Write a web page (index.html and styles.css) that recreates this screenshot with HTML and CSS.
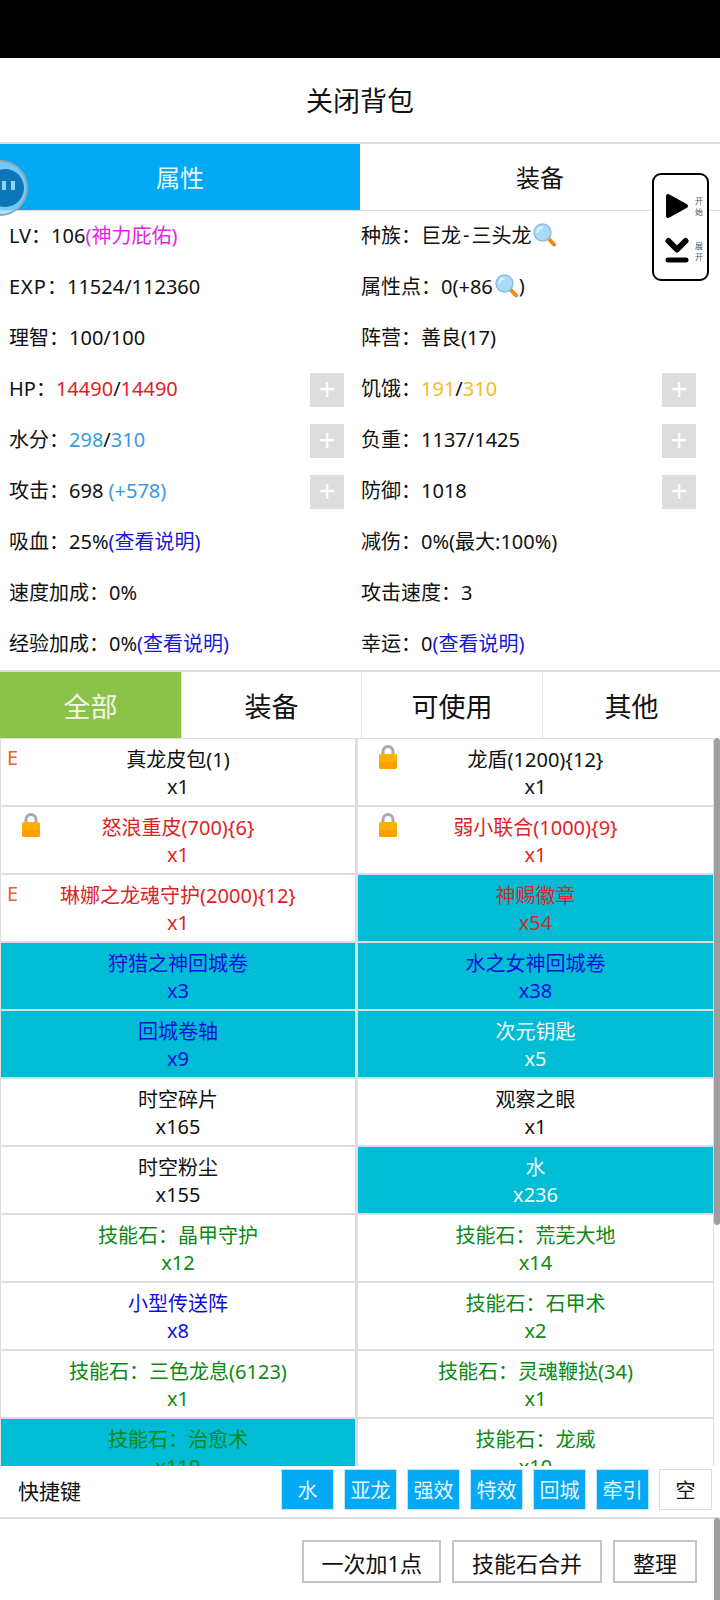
FILE: index.html
```html
<!DOCTYPE html>
<html lang="zh-CN">
<head>
    <meta charset="UTF-8">
    <meta name="viewport" content="width=device-width, initial-scale=1.0">
    <title>关闭背包</title>
    <link rel="stylesheet" href="styles.css">
</head>
<body>
    <svg class="defs" width="0" height="0">
        <symbol id="lens" viewBox="0 0 24 24">
            <path d="M14.5 14.5 L21 21.5" stroke="#f08a1c" stroke-width="4" stroke-linecap="round"/>
            <circle cx="9.5" cy="9.5" r="8.5" fill="#a8dbf7" stroke="#8bbddb" stroke-width="1.4"/>
            <path d="M4.5 9 A5 5 0 0 1 9 4.5" fill="none" stroke="#e4f5fd" stroke-width="1.8" stroke-linecap="round"/>
        </symbol>
        <symbol id="lock" viewBox="0 0 18 24">
            <path d="M4 11 V6.5 A5 5 0 0 1 14 6.5 V11" fill="none" stroke="#a9a9a9" stroke-width="3"/>
            <rect x="0" y="9" width="18" height="15" rx="2" fill="#ffb000"/>
            <rect x="0" y="17" width="18" height="7" rx="2" fill="#ff9f00"/>
        </symbol>
    </svg>

    <div class="page">
        <div class="statusbar"></div>
        <div class="title"><span>关闭背包</span></div>

        <div class="tabs">
            <div class="tab active"><span>属性</span></div>
            <div class="tab"><span>装备</span></div>
        </div>

        <div class="attrs">
            <div class="attr"><span>LV：106<span class="pink">(神力庇佑)</span></span></div>
            <div class="attr"><span class="with-icon">种族：巨龙<span class="dash">-</span>三头龙<svg class="lens"><use href="#lens"/></svg></span></div>
            <div class="attr"><span><span class="wide">EXP</span>：11524/112360</span></div>
            <div class="attr"><span class="with-icon">属性点：0(+86<svg class="lens"><use href="#lens"/></svg>)</span></div>
            <div class="attr"><span>理智：100/100</span></div>
            <div class="attr"><span>阵营：善良(17)</span></div>
            <div class="attr"><span>HP：<span class="red">14490</span>/<span class="red">14490</span></span><div class="plus">+</div></div>
            <div class="attr"><span>饥饿：<span class="yellow">191</span>/<span class="yellow">310</span></span><div class="plus">+</div></div>
            <div class="attr"><span>水分：<span class="sky">298</span>/<span class="sky">310</span></span><div class="plus">+</div></div>
            <div class="attr"><span>负重：1137/1425</span><div class="plus">+</div></div>
            <div class="attr"><span>攻击：698 <span class="sky">(+578)</span></span><div class="plus">+</div></div>
            <div class="attr"><span>防御：1018</span><div class="plus">+</div></div>
            <div class="attr"><span>吸血：25%<span class="link">(查看说明)</span></span></div>
            <div class="attr"><span>减伤：0%(最大:100%)</span></div>
            <div class="attr"><span>速度加成：0%</span></div>
            <div class="attr"><span>攻击速度：3</span></div>
            <div class="attr"><span>经验加成：0%<span class="link">(查看说明)</span></span></div>
            <div class="attr"><span>幸运：0<span class="link">(查看说明)</span></span></div>
        </div>

        <div class="filters">
            <div class="filter active">全部</div>
            <div class="filter">装备</div>
            <div class="filter">可使用</div>
            <div class="filter">其他</div>
        </div>

        <div class="items">
            <div class="item"><span class="mark">E</span>真龙皮包(1)<br>x1</div>
            <div class="item"><svg class="lock"><use href="#lock"/></svg>龙盾(1200){12}<br>x1</div>
            <div class="item red"><svg class="lock"><use href="#lock"/></svg>怒浪重皮(700){6}<br>x1</div>
            <div class="item red"><svg class="lock"><use href="#lock"/></svg>弱小联合(1000){9}<br>x1</div>
            <div class="item red"><span class="mark">E</span>琳娜之龙魂守护(2000){12}<br>x1</div>
            <div class="item teal dark-red">神赐徽章<br>x54</div>
            <div class="item teal blue">狩猎之神回城卷<br>x3</div>
            <div class="item teal blue">水之女神回城卷<br>x38</div>
            <div class="item teal blue">回城卷轴<br>x9</div>
            <div class="item teal white">次元钥匙<br>x5</div>
            <div class="item">时空碎片<br>x165</div>
            <div class="item">观察之眼<br>x1</div>
            <div class="item">时空粉尘<br>x155</div>
            <div class="item teal white">水<br>x236</div>
            <div class="item green">技能石：晶甲守护<br>x12</div>
            <div class="item green">技能石：荒芜大地<br>x14</div>
            <div class="item blue">小型传送阵<br>x8</div>
            <div class="item green">技能石：石甲术<br>x2</div>
            <div class="item green">技能石：三色龙息(6123)<br>x1</div>
            <div class="item green">技能石：灵魂鞭挞(34)<br>x1</div>
            <div class="item teal green">技能石：治愈术<br>x119</div>
            <div class="item green">技能石：龙威<br>x10</div>
        </div>

        <div class="shortcuts">
            <div class="shortcuts-label">快捷键</div>
            <div class="chips">
                <div class="chip">水</div>
                <div class="chip">亚龙</div>
                <div class="chip">强效</div>
                <div class="chip">特效</div>
                <div class="chip">回城</div>
                <div class="chip">牵引</div>
                <div class="chip empty">空</div>
            </div>
        </div>

        <div class="actions">
            <div class="action first">一次加1点</div>
            <div class="action">技能石合并</div>
            <div class="action">整理</div>
        </div>

        <div class="scrollbar list-bar"></div>
        <div class="scrollbar page-bar"></div>

        <div class="ball">
            <div class="ball-inner"><i></i><i></i></div>
        </div>

        <div class="float-panel">
            <div class="float-row">
                <svg class="float-icon" viewBox="0 0 24 26"><path d="M3 3 L21 13 L3 23 Z" fill="#000" stroke="#000" stroke-width="4" stroke-linejoin="round"/></svg>
                <span class="float-text">开<br>始</span>
            </div>
            <div class="float-row">
                <svg class="float-icon" viewBox="0 0 24 26"><path d="M3.5 3 L12 11.5 L20.5 3" fill="none" stroke="#000" stroke-width="6" stroke-linecap="round" stroke-linejoin="round"/><path d="M3 22 H21" stroke="#000" stroke-width="5" stroke-linecap="round"/></svg>
                <span class="float-text">展<br>开</span>
            </div>
        </div>
    </div>
</body>
</html>
```

FILE: styles.css
```css
* {
    box-sizing: border-box;
}
body {
    margin: 0;
    font-family: "Noto Sans", "Noto Sans CJK SC", sans-serif;
    font-size: 20px;
    color: #111;
    background: #fff;
}
.defs {
    position: absolute;
}
.page {
    position: relative;
    width: 720px;
    height: 1600px;
    overflow: hidden;
}
.statusbar {
    height: 58px;
    background: #000;
}
.title {
    height: 86px;
    display: flex;
    align-items: center;
    justify-content: center;
    padding-bottom: 2px;
    font-size: 27px;
    border-bottom: 2px solid #ddd;
}
.tabs {
    display: grid;
    grid-template-columns: 360px 360px;
    height: 67px;
    border-bottom: 1px solid #ddd;
}
.tab {
    display: flex;
    align-items: center;
    justify-content: center;
    padding-bottom: 2px;
    font-size: 24px;
}
.tab.active {
    background: #03a9f4;
    color: #e8f6fe;
}

/* attributes */
.attrs {
    display: grid;
    grid-template-columns: 352px 359px;
    grid-auto-rows: 51px;
    padding-left: 9px;
}
.attr {
    display: flex;
    align-items: center;
    justify-content: space-between;
    padding-right: 17px;
    white-space: nowrap;
}
.attr:nth-child(even) {
    padding-right: 24px;
}
.attr > span {
    margin-bottom: 4px;
}
.with-icon {
    display: inline-flex;
    align-items: center;
}
.wide {
    letter-spacing: 1px;
}
.dash {
    margin: 0 2px;
}
.lens {
    width: 24px;
    height: 24px;
    margin-left: 2px;
}
.plus {
    width: 34px;
    height: 34px;
    background: #ddd;
    color: #fff;
    font-size: 30px;
    line-height: 31px;
    text-align: center;
}
.pink {
    color: #e81ee8;
}
.red {
    color: #e01f26;
}
.yellow {
    color: #f6bb25;
}
.sky {
    color: #3a9ade;
}
.link {
    color: #1a1ad2;
}

/* filter tabs */
.filters {
    display: grid;
    grid-template-columns: 181px 180px 181px 1fr;
    height: 68px;
    border-top: 2px solid #ddd;
}
.filter {
    display: flex;
    align-items: center;
    justify-content: center;
    font-size: 27px;
    border-left: 1px solid #e4e4e4;
}
.filter.active {
    background: #8bc34a;
    color: #f1f8e6;
    border-left: 0;
}

/* item list */
.items {
    display: grid;
    grid-template-columns: 357px 357px;
    grid-auto-rows: 68px;
    width: 714px;
    height: 728px;
    overflow: hidden;
}
.item {
    position: relative;
    padding-top: 7px;
    border: 1px solid #dedede;
    line-height: 27px;
    text-align: center;
    white-space: nowrap;
}
.item:nth-child(odd) {
    border-right-width: 2px;
}
.item.teal {
    background: #00bcd4;
}
.item.red {
    color: #e01f26;
}
.item.dark-red {
    color: #d8262e;
}
.item.blue {
    color: #0f0fd8;
}
.item.green {
    color: #0a8a12;
}
.item.white {
    color: #f2fbfd;
}
.mark {
    position: absolute;
    left: 6px;
    top: 5px;
    font-size: 20px;
    line-height: 27px;
    color: #e8632c;
}
.lock {
    position: absolute;
    left: 21px;
    top: 6px;
    width: 18px;
    height: 24px;
}

/* bottom */
.shortcuts {
    display: flex;
    align-items: center;
    justify-content: space-between;
    height: 53px;
    padding: 0 8px 4px 18px;
    border-bottom: 2px solid #ddd;
}
.shortcuts-label {
    font-size: 21px;
}
.chips {
    display: flex;
    gap: 10px;
}
.chip {
    width: 53px;
    height: 41px;
    display: flex;
    align-items: center;
    justify-content: center;
    background: #03a9f4;
    border: 1px solid #bfe6fb;
    color: #e8f6fe;
}
.chip.empty {
    background: #fff;
    border-color: #ddd;
    color: #111;
}
.actions {
    display: flex;
    justify-content: flex-end;
    gap: 11px;
    padding: 21px 23px 0 0;
}
.action {
    height: 43px;
    padding: 0 18px;
    display: flex;
    align-items: center;
    border: 2px solid #c4c4c4;
    font-size: 22px;
}
.action.first {
    padding: 0 17px;
}
.scrollbar {
    position: absolute;
    right: 0;
    width: 6px;
    background: #9e9e9e;
    border-radius: 3px;
}
.list-bar {
    top: 738px;
    height: 487px;
}
.page-bar {
    top: 1518px;
    height: 90px;
}

/* overlays */
.ball {
    position: absolute;
    left: -28px;
    top: 160px;
    width: 56px;
    height: 56px;
    padding: 7px 0 0 12px;
    border-radius: 50%;
    background: rgba(150, 215, 250, 0.75);
    border: 2px solid #8fa9b8;
}
.ball-inner {
    width: 38px;
    height: 38px;
    display: flex;
    justify-content: flex-end;
    align-items: center;
    gap: 5px;
    padding: 0 9px 5px 0;
    border-radius: 50%;
    background: #0b76b8;
}
.ball-inner i {
    width: 4px;
    height: 9px;
    background: #8fd4f7;
}
.float-panel {
    position: absolute;
    left: 652px;
    top: 173px;
    width: 57px;
    height: 108px;
    padding: 17px 0 0 11px;
    display: flex;
    flex-direction: column;
    gap: 17px;
    background: #fff;
    border: 2px solid #000;
    border-radius: 9px;
}
.float-row {
    display: flex;
    align-items: center;
    gap: 6px;
}
.float-icon {
    width: 24px;
    height: 28px;
}
.float-text {
    font-size: 8px;
    line-height: 11px;
    color: #555;
}
```
